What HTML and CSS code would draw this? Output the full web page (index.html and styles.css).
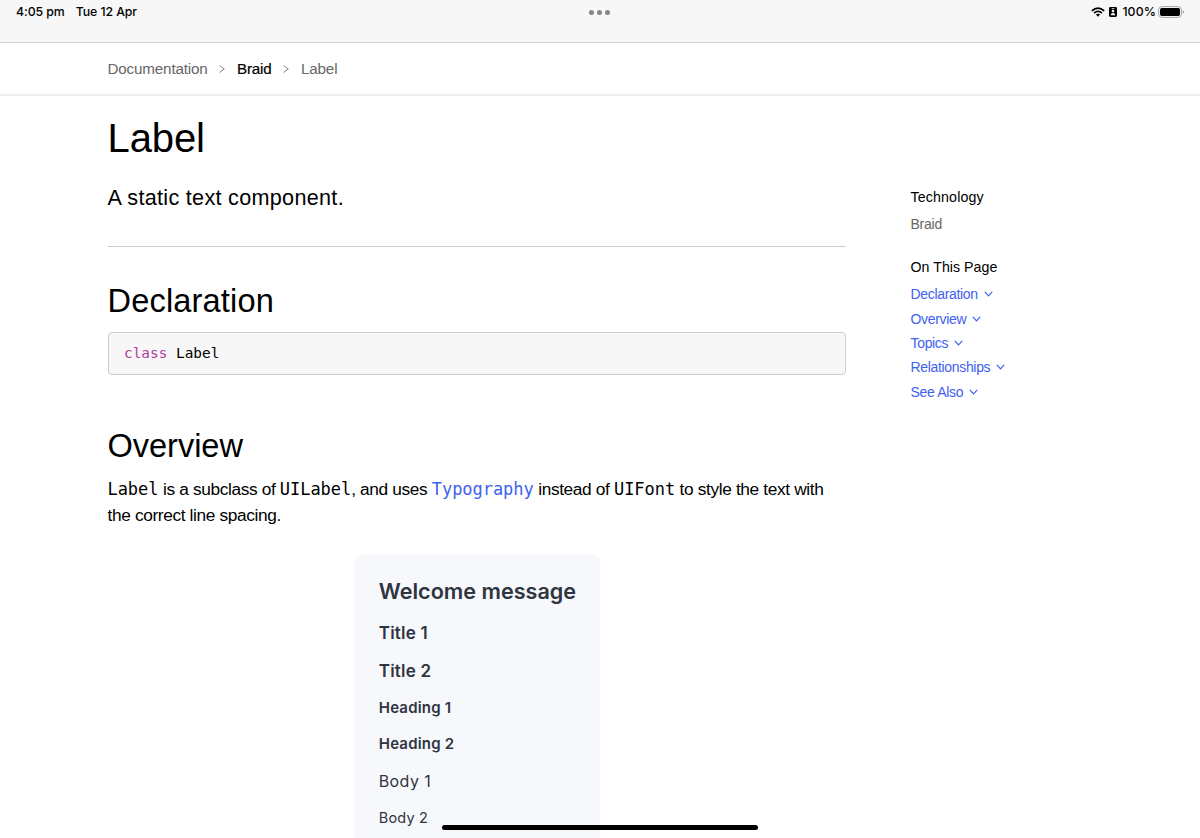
FILE: index.html
```html
<!DOCTYPE html>
<html lang="en">
<head>
<meta charset="utf-8">
<title>Label</title>
<link rel="stylesheet" href="styles.css">
</head>
<body>
<header class="status">
  <div class="status-left"><span class="time">4:05 pm</span><span class="date">Tue 12 Apr</span></div>
  <div class="dots"><i></i><i></i><i></i></div>
  <div class="status-right">
    <svg class="wifi" viewBox="0 0 14 10" width="14" height="10"><g fill="none" stroke="#000" stroke-width="1.7"><path d="M.8 3.8Q7-1.7 13.2 3.8"/><path d="M3.1 6.1Q7 2.8 10.9 6.1"/></g><path d="M4.9 7.6Q7 6 9.1 7.6L7 9.8Z"/></svg>
    <svg class="badge" viewBox="0 0 8 10" width="8" height="10"><rect width="8" height="10" rx="1.4"/><g fill="#f7f7f7"><rect x="2.5" y=".9" width="3" height=".8" rx=".4"/><circle cx="4" cy="4.1" r="1.35"/><path d="M1.6 8.2Q1.8 6.1 4 6.1T6.4 8.2Z"/></g></svg>
    <span class="percent">100%</span>
    <svg class="battery" viewBox="0 0 27 12" width="27" height="12"><rect x=".6" y=".6" width="22.8" height="10.8" rx="3.2" fill="none" stroke="#a5a5a5"/><rect x="2" y="2" width="20" height="8" rx="1.8"/><path d="M24.7 4.2Q26.2 4.7 26.2 6T24.7 7.8Z" fill="#a5a5a5"/></svg>
  </div>
</header>
<nav class="crumbs">
  <a class="crumb-doc">Documentation</a>
  <svg class="sep" viewBox="0 0 6 8" width="6" height="8"><path d="M.5.5 5.3 4 .5 7.5"/></svg>
  <a class="crumb-current">Braid</a>
  <svg class="sep" viewBox="0 0 6 8" width="6" height="8"><path d="M.5.5 5.3 4 .5 7.5"/></svg>
  <a class="crumb-label">Label</a>
</nav>
<div class="page">
  <main class="content">
    <h1>Label</h1>
    <p class="abstract">A static text component.</p>
    <hr>
    <h2 class="declaration">Declaration</h2>
    <pre class="source"><span class="keyword">class</span> Label</pre>
    <h2 class="overview">Overview</h2>
    <p class="text"><code>Label</code> is a subclass of <code>UILabel</code>, and uses <code class="link">Typography</code> instead of <code>UIFont</code> to style the text with<br>the correct line spacing.</p>
    <div class="card">
      <div class="welcome">Welcome message</div>
      <div class="title title-one">Title 1</div>
      <div class="title title-two">Title 2</div>
      <div class="heading heading-one">Heading 1</div>
      <div class="heading heading-two">Heading 2</div>
      <div class="body-one">Body 1</div>
      <div class="body-two">Body 2</div>
    </div>
  </main>
  <aside class="side">
    <h3 class="technology">Technology</h3>
    <div class="tech-name">Braid</div>
    <h3 class="on-page">On This Page</h3>
    <a class="jump"><span>Declaration</span><svg viewBox="0 0 9 6" width="9" height="6"><path d="M.8.8 4.5 4.9 8.2.8"/></svg></a>
    <a class="jump"><span>Overview</span><svg viewBox="0 0 9 6" width="9" height="6"><path d="M.8.8 4.5 4.9 8.2.8"/></svg></a>
    <a class="jump"><span>Topics</span><svg viewBox="0 0 9 6" width="9" height="6"><path d="M.8.8 4.5 4.9 8.2.8"/></svg></a>
    <a class="jump"><span>Relationships</span><svg viewBox="0 0 9 6" width="9" height="6"><path d="M.8.8 4.5 4.9 8.2.8"/></svg></a>
    <a class="jump"><span>See Also</span><svg viewBox="0 0 9 6" width="9" height="6"><path d="M.8.8 4.5 4.9 8.2.8"/></svg></a>
  </aside>
</div>
<div class="home"></div>
</body>
</html>
```
FILE: styles.css
```css
* { box-sizing: border-box; }
body {
  margin: 0;
  height: 838px;
  overflow: hidden;
  background: #fff;
  color: #000;
  font-family: "Liberation Sans", Arial, sans-serif;
}
h1, h2, h3, p, pre { margin: 0; font-weight: 400; white-space: nowrap; }
.status {
  height: 43px;
  display: grid;
  grid-template-columns: 1fr auto 1fr;
  align-items: start;
  padding: 0 15px 0 16px;
  background: #f7f7f7;
  border-bottom: 1px solid #d2d2d2;
  font: 500 12.3px/24px Inter, sans-serif;
}
.status-left { display: flex; gap: 11px; letter-spacing: -.07px; }
.dots { display: flex; gap: 3px; padding-top: 10px; margin-right: 2px; }
.dots i { width: 5px; height: 5px; border-radius: 50%; background: #858585; }
.status-right { display: flex; justify-content: flex-end; align-items: center; height: 24px; }
.wifi { margin-right: 4px; }
.badge { margin-right: 5px; }
.percent { margin-right: 2px; letter-spacing: .1px; }
.crumbs {
  height: 53px;
  display: flex;
  align-items: center;
  padding-left: 107.5px;
  border-bottom: 2px solid #eee;
  font-size: 15.2px;
  letter-spacing: -.16px;
  color: #666;
}
.crumb-current { color: #000; -webkit-text-stroke: .2px #000; }
.sep { margin: 0 11.7px; fill: none; stroke: #777; stroke-width: .9; }
.page { display: flex; padding-left: 107.5px; }
.content { width: 738.5px; display: flex; flex-direction: column; }
h1 { margin-top: 18px; font-size: 40px; line-height: 48px; letter-spacing: -.1px; }
.abstract { margin-top: 22px; font-size: 21.6px; line-height: 28px; letter-spacing: .3px; }
hr { width: 100%; height: 1px; margin: 34px 0 0; border: 0; background: #ccc; }
h2 { font-size: 32.6px; line-height: 38px; letter-spacing: .15px; }
.declaration { margin-top: 35px; }
.source {
  height: 43px;
  margin-top: 12px;
  padding: 0 15.5px;
  border: 1px solid #ccc;
  border-radius: 4px;
  background: #f7f7f7;
  font: 14.4px/40px "DejaVu Sans Mono", monospace;
}
.keyword { color: #ad3da4; }
.overview { margin-top: 52px; letter-spacing: -.05px; }
.text { margin-top: 11px; font-size: 17.3px; line-height: 26px; letter-spacing: -.38px; word-spacing: .1px; }
.text code { font-family: "DejaVu Sans Mono", monospace; font-size: 17px; letter-spacing: -.05px; line-height: 20px; }
.text .link { color: #3f61f0; }
.card {
  align-self: center;
  width: 246px;
  height: 300px;
  margin-top: 27px;
  padding: 22px 25px;
  border-radius: 7px;
  background: #f7f8fc;
  color: #2e3440;
  font-family: Inter, sans-serif;
  white-space: nowrap;
}
.welcome { font-size: 21.6px; font-weight: 600; line-height: 28px; }
.title { font-size: 17px; font-weight: 600; line-height: 22px; letter-spacing: .2px; }
.title-one { margin-top: 16.5px; }
.title-two { margin-top: 16px; }
.heading { font-size: 15px; line-height: 20px; font-weight: 600; letter-spacing: .2px; }
.heading-one { margin-top: 16px; }
.heading-two { margin-top: 16px; }
.body-one { margin-top: 16.5px; font-size: 16px; line-height: 22px; letter-spacing: .4px; }
.body-two { margin-top: 16px; font-size: 14.5px; line-height: 20px; letter-spacing: .2px; }
.side { margin-left: 64.5px; padding-top: 91px; white-space: nowrap; }
h3 { font-size: 14.2px; line-height: 20px; letter-spacing: .03px; }
.technology { letter-spacing: .15px; }
.tech-name { margin-top: 7px; font-size: 14px; line-height: 20px; letter-spacing: -.25px; color: #666; }
.on-page { margin: 23px 0 5px; }
.jump { display: flex; align-items: center; gap: 6px; height: 24.4px; font-size: 14px; letter-spacing: -.33px; color: #3f61f0; }
.jump svg { fill: none; stroke: #3f61f0; stroke-width: 1.2; }
.home {
  position: absolute;
  left: 442px;
  top: 825px;
  width: 316px;
  height: 5px;
  border-radius: 3px;
  background: #000;
}
```
